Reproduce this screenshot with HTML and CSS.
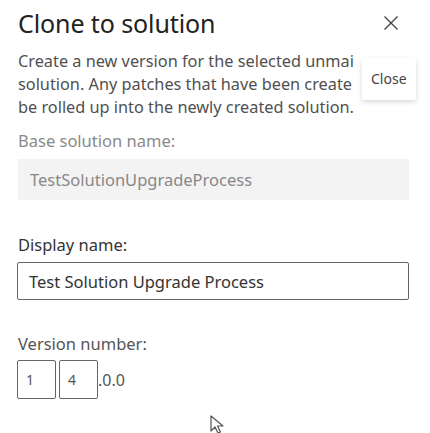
FILE: index.html
```html
<!DOCTYPE html>
<html>
<head>
<meta charset="utf-8">
<link rel="stylesheet" href="styles.css">
</head>
<body>
<div class="panel">
  <div class="header">
    <h1 class="title">Clone to solution</h1>
    <button class="close" aria-label="Close">
      <svg width="16" height="16" viewBox="0 0 16 16"><path d="M1.5 1.5 L14.5 14.5 M14.5 1.5 L1.5 14.5" stroke="#444" stroke-width="1.4" fill="none"/></svg>
    </button>
    <div class="tooltip">Close</div>
  </div>
  <p class="desc">Create a new version for the selected unmai<br>solution. Any patches that have been create<br>be rolled up into the newly created solution.</p>
  <div class="label muted">Base solution name:</div>
  <div class="readonly">TestSolutionUpgradeProcess</div>
  <div class="label dark">Display name:</div>
  <div class="input">Test Solution Upgrade Process</div>
  <div class="label mid">Version number:</div>
  <div class="version">
    <div class="vbox">1</div>
    <div class="vbox">4</div>
    <span class="rest">.0.0</span>
  </div>
  <div class="cursor-row">
    <svg class="cursor" width="16" height="20" viewBox="0 0 16 20"><path d="M1 1 L1 16 L5 12 L8 18 L10.5 17 L7.5 11 L13 11 Z" fill="#fff" stroke="#555" stroke-width="1.2" stroke-linejoin="round"/></svg>
  </div>
</div>
</body>
</html>
```
FILE: styles.css
```css
html, body {
  margin: 0;
  padding: 0;
  background: #fff;
  font-family: "Noto Sans", "Open Sans", sans-serif;
}
.panel {
  width: 430px;
  height: 433px;
  padding: 0 21px 0 18px;
  box-sizing: border-box;
  overflow: hidden;
}
.header {
  position: relative;
  display: flex;
  align-items: center;
  justify-content: space-between;
  height: 46px;
}
.title {
  margin: 0;
  font-size: 25px;
  font-weight: 400;
  color: #222;
  letter-spacing: -0.1px;
}
.close {
  background: none;
  border: 0;
  padding: 0;
  margin-right: 10px;
  width: 16px;
  height: 16px;
  display: flex;
}
.tooltip {
  position: absolute;
  z-index: 2;
  left: 344px;
  top: 58px;
  width: 54px;
  height: 42px;
  box-sizing: border-box;
  padding: 12px 0 0 9px;
  font-size: 14px;
  line-height: 18px;
  color: #444;
  background: #fff;
  box-shadow: 0 2px 5px rgba(0,0,0,0.16);
  border-radius: 2px;
}
.desc {
  margin: 4px 0 0;
  font-size: 16.3px;
  line-height: 23px;
  color: #505050;
  white-space: nowrap;
}
.label {
  font-size: 16.5px;
  line-height: 20px;
}
.muted { color: #8a8a8a; margin-top: 12px; }
.dark { color: #333; margin-top: 35px; }
.mid { color: #555; margin-top: 34px; }
.readonly {
  margin-top: 8px;
  height: 41px;
  background: #f3f3f3;
  display: flex;
  align-items: center;
  padding-left: 12px;
  font-size: 16.5px;
  color: #888;
}
.input {
  margin-top: 7px;
  margin-left: -1px;
  height: 38px;
  border: 1.5px solid #666;
  border-radius: 2px;
  box-sizing: border-box;
  display: flex;
  align-items: center;
  padding-left: 11px;
  font-size: 16.5px;
  color: #333;
}
.version {
  display: flex;
  align-items: center;
  margin-top: 6px;
  margin-left: -1px;
  gap: 3px;
}
.vbox {
  width: 39px;
  height: 39px;
  border: 1.5px solid #666;
  border-radius: 2px;
  box-sizing: border-box;
  display: flex;
  align-items: center;
  padding-left: 8px;
  font-size: 14px;
  color: #555;
}
.rest {
  margin-left: -3px;
  font-size: 16px;
  color: #555;
}
.cursor-row {
  padding-left: 192px;
  margin-top: 16px;
}
.cursor { display: block; }
```
